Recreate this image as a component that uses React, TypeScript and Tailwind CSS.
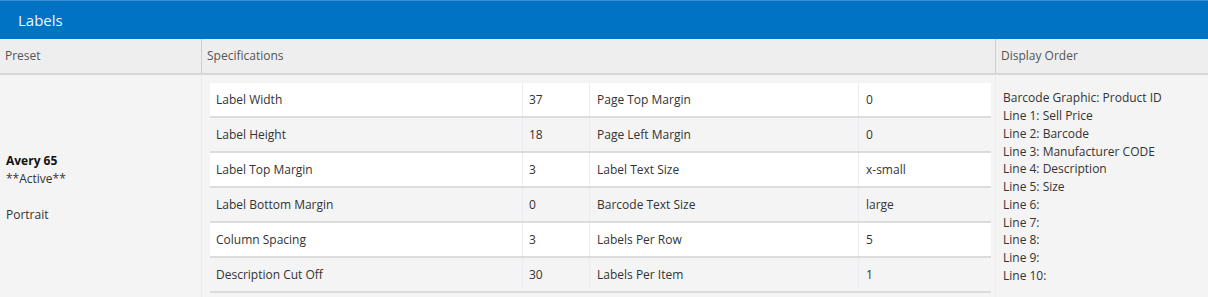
import React from 'react';

const specs: [string, string, string, string][] = [
  ['Label Width', '37', 'Page Top Margin', '0'],
  ['Label Height', '18', 'Page Left Margin', '0'],
  ['Label Top Margin', '3', 'Label Text Size', 'x-small'],
  ['Label Bottom Margin', '0', 'Barcode Text Size', 'large'],
  ['Column Spacing', '3', 'Labels Per Row', '5'],
  ['Description Cut Off', '30', 'Labels Per Item', '1'],
];

const displayOrder = [
  'Barcode Graphic: Product ID',
  'Line 1: Sell Price',
  'Line 2: Barcode',
  'Line 3: Manufacturer CODE',
  'Line 4: Description',
  'Line 5: Size',
  'Line 6:',
  'Line 7:',
  'Line 8:',
  'Line 9:',
  'Line 10:',
];

export default function App() {
  return (
    <div className="w-[1208px] h-[297px] overflow-hidden bg-[#f4f4f4] text-[12px] text-[#333] font-['Open_Sans',sans-serif]">
      <div className="h-[39px] bg-[#0073c4] border-t border-[#3b8fd2] flex items-center pl-[18px] text-[15px] text-[#f0f6fc]">
        Labels
      </div>

      <div className="grid grid-cols-[202px_794px_1fr] h-[36px] bg-[#eeeeee] border-b-2 border-[#d6d6d6] text-[#555]">
        <div className="border-r border-[#cfcfcf] flex items-center pl-[5px]">Preset</div>
        <div className="border-r border-[#cfcfcf] flex items-center pl-[5px]">Specifications</div>
        <div className="flex items-center pl-[5px]">Display Order</div>
      </div>

      <div className="grid grid-cols-[202px_794px_1fr] h-[226px]">
        <div className="border-r border-[#ebebf5] flex flex-col justify-center pl-[6px] leading-[18px]">
          <div className="font-bold text-[#111]">Avery 65</div>
          <div>**Active**</div>
          <div className="h-[18px]" />
          <div>Portrait</div>
        </div>

        <div className="border-r border-[#ebebf5] pt-[8px] pl-[8px] pr-[4px]">
          {specs.map((row, i) => (
            <div
              key={row[0]}
              className={`grid grid-cols-[313px_67px_269px_132px] h-[35px] border-b-2 border-[#dcdcdc] ${i % 2 === 0 ? 'bg-white' : 'bg-[#f4f4f4]'}`}
            >
              <div className="flex items-center pl-[6px] border-r border-[#ececf6]">{row[0]}</div>
              <div className="flex items-center pl-[6px] border-r border-[#ececf6]">{row[1]}</div>
              <div className="flex items-center pl-[7px] border-r border-[#ececf6]">{row[2]}</div>
              <div className="flex items-center pl-[7px]">{row[3]}</div>
            </div>
          ))}
        </div>

        <div className="flex flex-col justify-center pl-[7px] leading-[17.8px] -mt-[2px]">
          {displayOrder.map((line) => (
            <div key={line}>{line}</div>
          ))}
        </div>
      </div>
    </div>
  );
}
